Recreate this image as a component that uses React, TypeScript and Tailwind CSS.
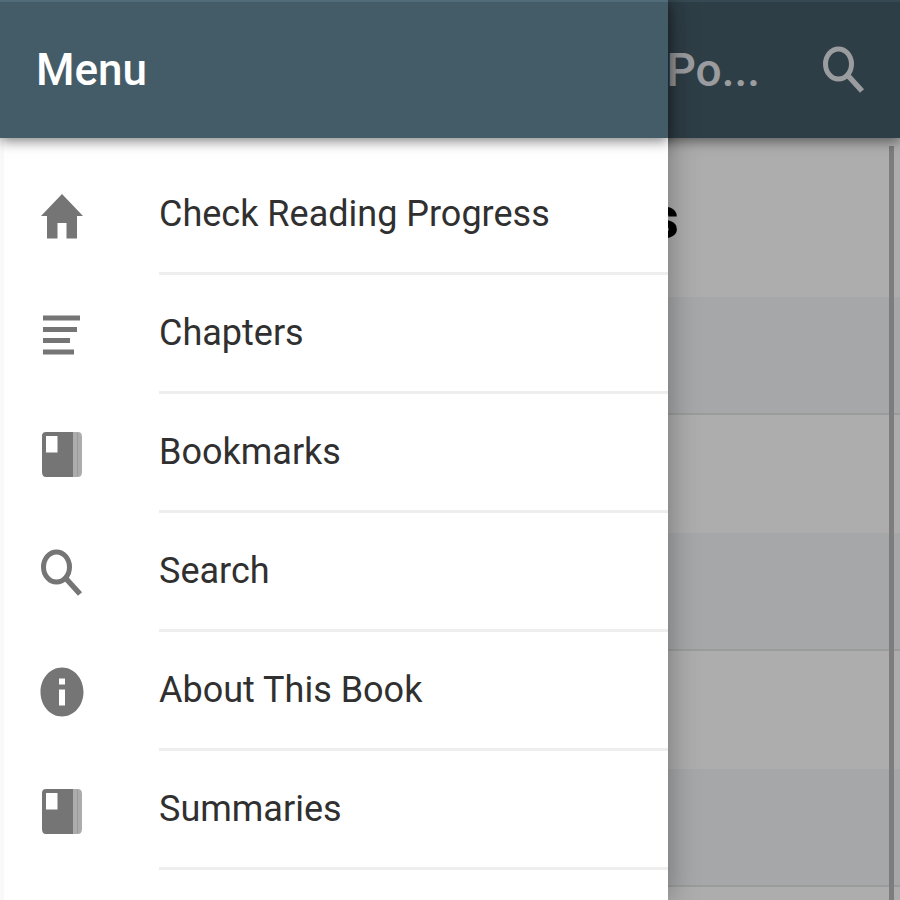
import type { ReactNode } from "react";

function IconBox({ children }: { children: ReactNode }) {
  return (
    <svg
      aria-hidden="true"
      viewBox="0 0 44 50"
      className="h-[50px] w-[44px] shrink-0"
      fill="currentColor"
    >
      {children}
    </svg>
  );
}

function HomeIcon() {
  return (
    <IconBox>
      <path d="M22 3 43 25H37V47.500H26.500V32H17.500V47.500H7V25H1Z" />
    </IconBox>
  );
}

function ChaptersIcon() {
  return (
    <IconBox>
      <path d="M3 5.500H40V10.500H3ZM3 17H37V22H3ZM3 28H30V33H3ZM3 39.500H34V44.500H3Z" />
    </IconBox>
  );
}

function BookIcon() {
  return (
    <IconBox>
      <path
        fillRule="evenodd"
        d="M6 3H33V48H6Q2 48 2 43V7Q2 3 6 3ZM6 7V23.500H17.500V7Z"
      />
      <path opacity=".6" d="M33 3H38Q42 3 42 8V43Q42 48 38 48H33Z" />
      <path opacity=".35" d="M37 4H38V47H37Z" />
    </IconBox>
  );
}

function SearchIcon() {
  return (
    <IconBox>
      <g fill="none" stroke="currentColor" strokeWidth="5">
        <ellipse cx="16.500" cy="19" rx="13" ry="15" />
        <path d="M25 29.500 40 46" strokeWidth="5.500" />
      </g>
    </IconBox>
  );
}

function InfoIcon() {
  return (
    <IconBox>
      <path
        fillRule="evenodd"
        d="M22 0.500C34 .5 43.500 11.500 43.500 25S34 49.500 22 49.500 .5 38.500 .5 25 10 .5 22 .5ZM19 11.500V17.500H25V11.500ZM19 22.500V38.500H25V22.500Z"
      />
    </IconBox>
  );
}

const items = [
  { label: "Check Reading Progress", icon: <HomeIcon /> },
  { label: "Chapters", icon: <ChaptersIcon /> },
  { label: "Bookmarks", icon: <BookIcon /> },
  { label: "Search", icon: <SearchIcon /> },
  { label: "About This Book", icon: <InfoIcon /> },
  { label: "Summaries", icon: <BookIcon /> },
];

function BookPage() {
  return (
    <div className="flex h-full flex-col bg-white">
      <header className="z-10 flex h-[138px] shrink-0 items-center justify-end gap-[62px] border-t-2 border-[#526c7a] bg-[#445c68] pr-[34px] text-[#e4e6ea] shadow-[0_3px_12px_rgba(0,0,0,0.5)]">
        <h2 className="text-[46px] leading-[54px] font-medium">Po...</h2>
        <button type="button" aria-label="Search" className="flex">
          <SearchIcon />
        </button>
      </header>
      <main className="grow">
        <h3 className="flex h-[159px] items-center justify-end pr-[221px] text-[60px] leading-[64px] font-bold text-black">
          s
        </h3>
        <ul>
          {[0, 1, 2, 3, 4, 5].map((row) => (
            <li
              key={row}
              className="h-[118px] border-b-2 border-transparent odd:border-[#e4e6e6] odd:bg-[#f3f6f8]"
            />
          ))}
        </ul>
      </main>
      <div className="absolute top-[146px] right-[6px] bottom-0 w-[5px] bg-[#b8b8b8]" />
    </div>
  );
}

function Drawer() {
  return (
    <aside className="absolute inset-y-0 left-0 flex w-3/4 max-w-[668px] flex-col bg-white shadow-[0_0_28px_rgba(0,0,0,0.35)]">
      <header className="z-10 flex h-[138px] shrink-0 items-center border-t-2 border-[#526c7a] bg-[#445c68] px-9 shadow-[0_3px_12px_rgba(0,0,0,0.5)]">
        <h1 className="text-[44px] leading-[54px] font-medium text-white">Menu</h1>
      </header>
      <nav className="grow border-l-4 border-[#f9f9f9] pt-[18px]">
        <ul>
          {items.map((item) => (
            <li key={item.label}>
              <button
                type="button"
                className="flex h-[119px] w-full items-stretch gap-[75px] pl-9 text-left"
              >
                <span className="flex items-center text-[#757575]">{item.icon}</span>
                <span className="flex grow items-center border-b-3 border-[#eeeeee] text-[36px] leading-[44px] whitespace-nowrap text-[#303030]">
                  {item.label}
                </span>
              </button>
            </li>
          ))}
        </ul>
      </nav>
    </aside>
  );
}

export default function App() {
  return (
    <div className="relative h-screen overflow-hidden font-['Roboto','Liberation_Sans',sans-serif]">
      <BookPage />
      <div className="absolute inset-0 z-20 bg-black/32">
        <Drawer />
      </div>
    </div>
  );
}
